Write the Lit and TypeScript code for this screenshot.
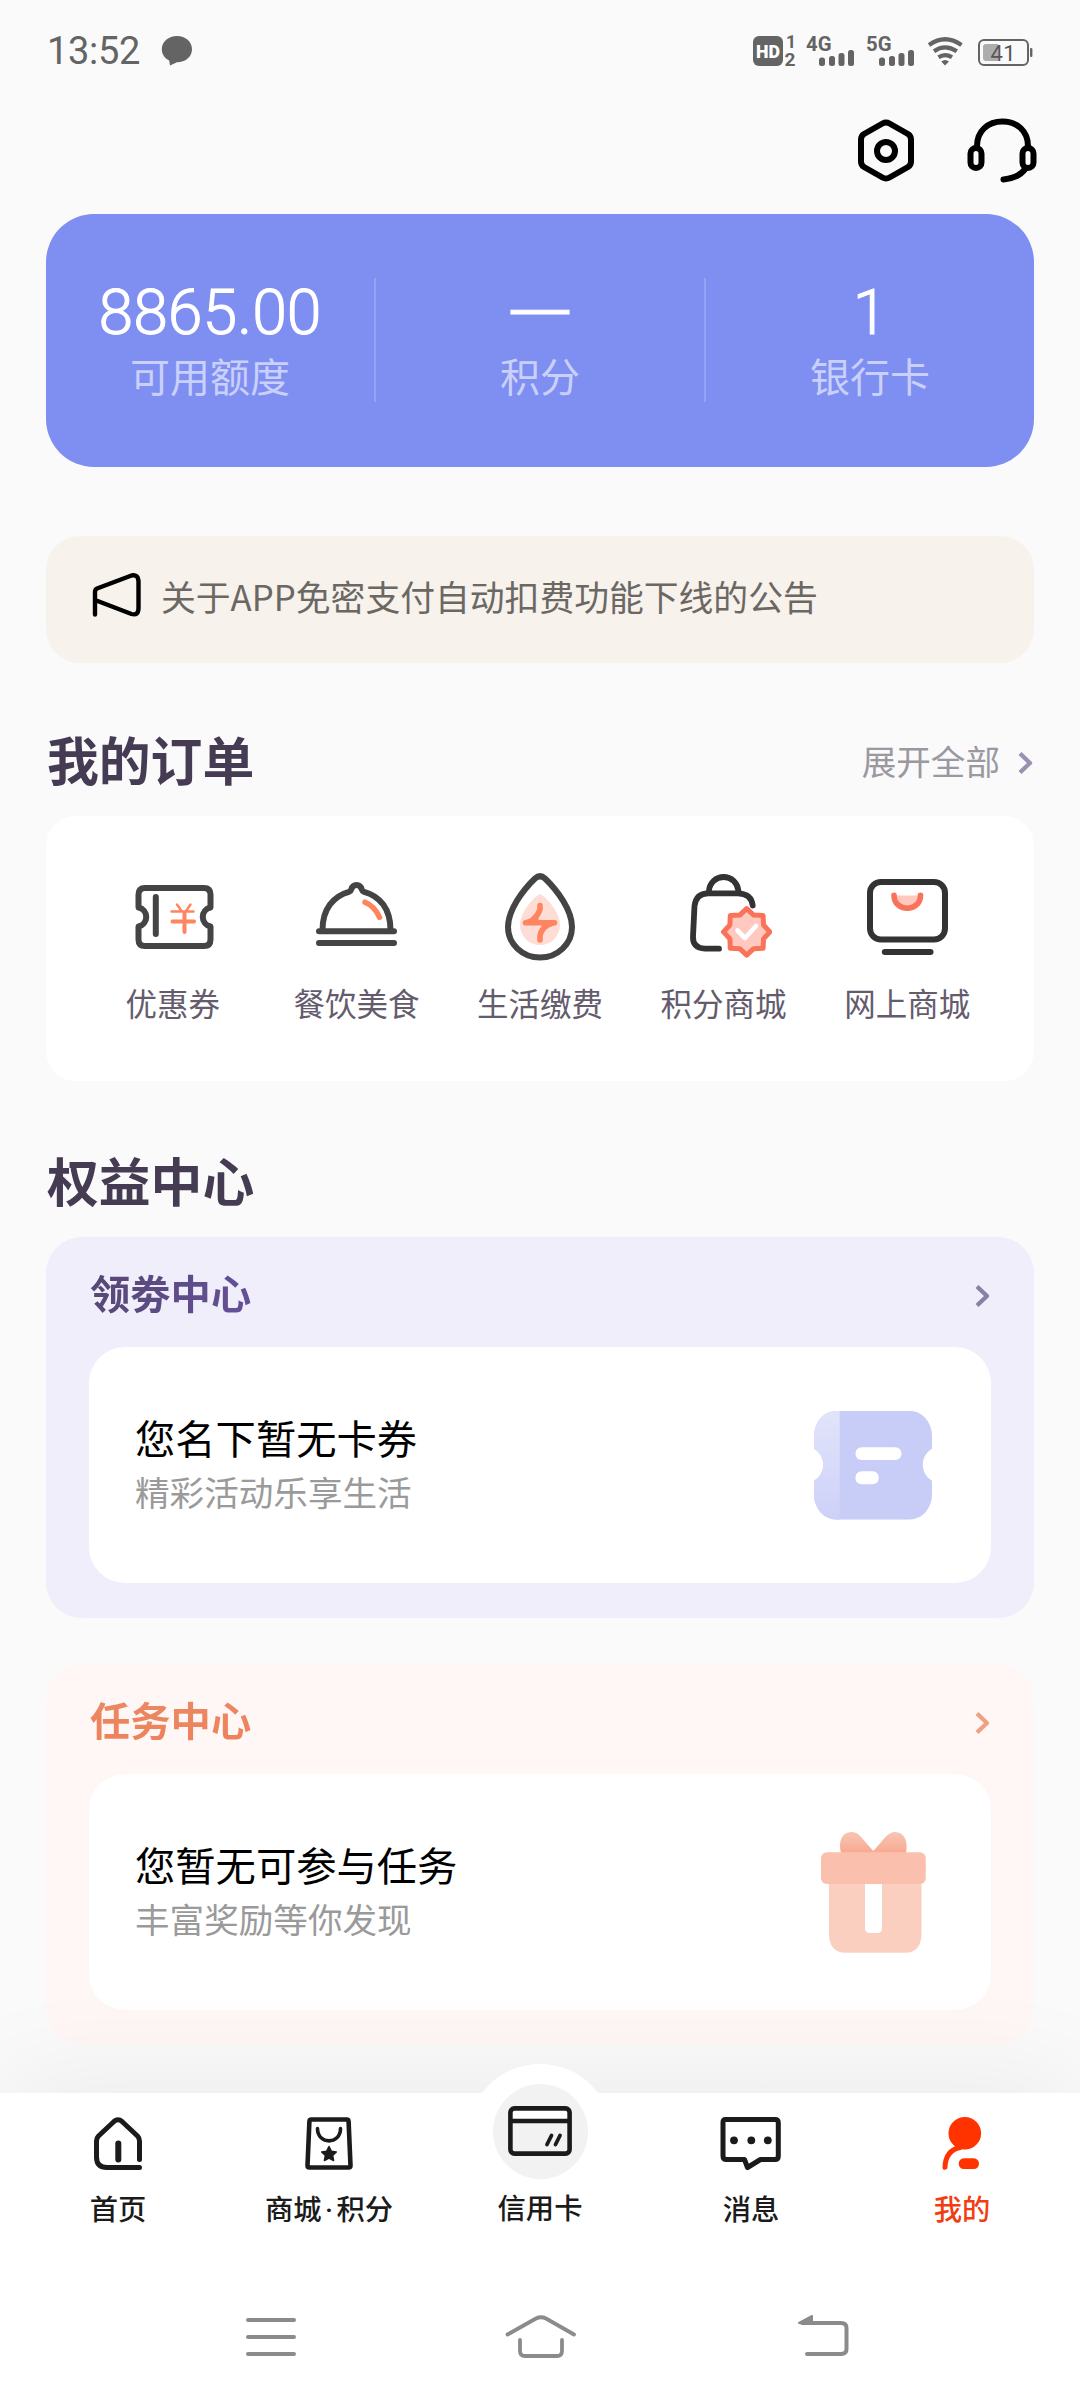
import { LitElement, html, css, svg, nothing, type TemplateResult } from "lit";
import { customElement, property } from "lit/decorators.js";

const burst = (cx: number, cy: number, tip: number, valley: number): string =>
  Array.from({ length: 16 }, (_, i) => {
    const r = i % 2 ? valley : tip;
    const a = (i * Math.PI) / 8;
    return `${(cx + r * Math.sin(a)).toFixed(2)},${(cy - r * Math.cos(a)).toFixed(2)}`;
  }).join(" ");

const stroke = (w: number, body: TemplateResult, color = "#444") => svg`
  <g fill="none" stroke=${color} stroke-width=${w} stroke-linecap="round" stroke-linejoin="round">${body}</g>`;

const ICONS: Record<string, TemplateResult> = {
  voucher: html`<svg width="96" height="92" viewBox="0 0 96 92">
    ${stroke(6, svg`
      <path d="M20 17H79q6.5 0 6.5 6.5V36.500A9.700 9.700 0 0 0 85.500 55.500V68.500q0 6.500-6.500 6.500H20q-6.500 0-6.500-6.500V55.500A9.700 9.700 0 0 0 13.500 36.500V23.500q0-6.500 6.500-6.500z"/>
      <path d="M30.800 26V63"/>`)}
    ${stroke(2.4, svg`<path d="M52 33.500l4.500 6.500M65.500 33.500l-4.500 6.500M46.500 40.500H68.500"/>`, "#FF8460")}
    ${stroke(4, svg`<path d="M47.500 50.500H69M59.500 42V61"/>`, "#FF8460")}
  </svg>`,
  dining: html`<svg width="96" height="92" viewBox="0 0 96 92">
    ${stroke(6, svg`
      <path d="M14.500 59C14.500 38 25.500 25 41 20.800Q42.800 20 43.200 18.500Q44.500 14 48.500 14T53.800 18.500Q54.200 20 56 20.800C72 25 82.500 38 82.500 59"/>
      <path d="M11 60.300H86M11 72H86"/>`)}
    ${stroke(5.5, svg`<path d="M57 31.200Q66.500 35 71.500 46.300"/>`, "#FF8460")}
  </svg>`,
  utility: html`<svg width="96" height="92" viewBox="0 0 96 92">
    <path d="M48 23C57 28 68 43 68 54A20 20 0 0 1 28 54C28 43 39 28 48 23z" fill="#FDDDD5"/>
    ${stroke(6, svg`<path d="M43 7.500Q48 3 53 7.500C65 19 80 39 80 56A32 30.500 0 0 1 16 56C16 39 31 19 43 7.500z"/>`)}
    ${stroke(5.6, svg`<path d="M48 34.500V38Q46.500 44 40 49.500L36 51M33.500 51.700H62.500M60 52.500L56 54Q48.500 58 48 65.500V69"/>`, "#FF8460")}
    <path d="M36 52L46 44L47 51zM60 51.500L50 60L49 52z" fill="#FF8460"/>
  </svg>`,
  points: html`<svg width="96" height="92" viewBox="0 0 96 92">
    ${stroke(5.8, svg`
      <path d="M43 77.700H29Q16.500 77 17 65.500L18.500 35Q20 22.300 32 22.300H62Q75.500 22.800 76.700 34.500"/>
      <path d="M33 21.500V19.500A14.700 14.700 0 0 1 62.300 19.500V21.500"/>`, "#333")}
    <polygon points=${burst(70.7, 60.9, 23.2, 18.2)} fill="#FFC9C0" stroke="#F9735A" stroke-width="5" stroke-linejoin="round"/>
    ${stroke(4.6, svg`<path d="M61.500 59.500L69 67L80 55"/>`, "#fff")}
  </svg>`,
  online: html`<svg width="96" height="92" viewBox="-1 0 96 92">
    ${stroke(6, svg`<rect x="10" y="11" width="75" height="57.500" rx="11"/><path d="M24.800 81H70.500"/>`, "#333")}
    <path d="M34 24.500C34 41.500 60 41.500 60 24.500z" fill="#FFC9C0"/>
    ${stroke(5.6, svg`<path d="M34 24.200C34 41.500 60.500 41.500 60.500 24.200"/>`, "#F9735A")}
  </svg>`,
  coupon: html`<svg width="118" height="110" viewBox="0 -0.700 118 110">
    <defs>
      <linearGradient id="band" x1="0" y1="0" x2="0" y2="1"><stop offset="0" stop-color="#E2E4FA"/><stop offset="1" stop-color="#CDD1F8"/></linearGradient>
      <clipPath id="shape"><path d="M23 0H95A23 25 0 0 1 118 25V38A18.500 18.500 0 0 0 118 70V84A23 25 0 0 1 95 109H23A23 25 0 0 1 0 84V70A18.500 18.500 0 0 0 0 38V25A23 25 0 0 1 23 0z"/></clipPath>
    </defs>
    <g clip-path="url(#shape)"><rect width="118" height="110" fill="#C8CDF8"/><rect width="25.700" height="110" fill="url(#band)"/></g>
    <rect x="41.500" y="36.500" width="46" height="12.800" rx="6" fill="#fff"/>
    <rect x="41.500" y="60.500" width="23.200" height="13" rx="6" fill="#fff"/>
  </svg>`,
  gift: html`<svg width="118" height="122" viewBox="0 0 118 122">
    <defs><linearGradient id="bow" x1="0" y1="0" x2="0" y2="1"><stop offset="0" stop-color="#F7C6B5"/><stop offset="1" stop-color="#F8A990"/></linearGradient></defs>
    <path d="M27 22C24 10 28 1 37.500 1Q43 1 47 6L59.300 20L71 6.500Q76 1 81 1C90 1 94.500 10 92 22z" fill="url(#bow)"/>
    <path d="M15 52H107.500V102Q107.500 121.700 91 121.700H31.500Q15 121.700 15 102z" fill="#FBCFBF"/>
    <path d="M51 52H68V97Q68 102 63 102H56Q51 102 51 97z" fill="#fff"/>
    <rect x="7" y="21.300" width="104.800" height="31.700" rx="6" fill="#FAC0AD"/>
  </svg>`,
  home: html`<svg width="64" height="56" viewBox="0 0 64 56">
    ${stroke(5, svg`<path d="M53.500 43.500V25Q53.500 22 51.500 20L36 5.500Q32 2 28 5.500L12.500 20Q10.500 22 10.500 25V41Q10.500 51.500 21 51.500H53.500"/>`, "#1b1b1b")}
    ${stroke(6, svg`<path d="M32.300 27.500V43.500"/>`, "#1b1b1b")}
  </svg>`,
  mall: html`<svg width="64" height="56" viewBox="0 0 64 56">
    ${stroke(4.6, svg`<path d="M14.300 3.500H49.700Q51.500 3.500 51.600 5.500L53.500 49.500Q53.500 51.500 51.500 51.500H12.500Q10.500 51.500 10.500 49.500L12.400 5.500Q12.500 3.500 14.300 3.500z"/>`, "#1b1b1b")}
    ${stroke(3.6, svg`<path d="M20.500 12.500C20.500 29 43.500 29 43.500 12.500"/>`, "#1b1b1b")}
    <path d="M32 30.500l2.300 4.700 5 .7-3.700 3.500 1 5.100-4.600-2.500-4.600 2.500 1-5.100-3.700-3.500 5-.7z" fill="#1b1b1b" stroke="#1b1b1b" stroke-width="1.500" stroke-linejoin="round"/>
  </svg>`,
  card: html`<svg width="64" height="50" viewBox="0 0 64 50">
    <path d="M3 4H61V15H3z" fill="#fff"/>
    ${stroke(4.6, svg`<rect x="2.400" y="2.400" width="59.200" height="45.200" rx="4"/><path d="M3 15H61"/>`, "#1b1b1b")}
    ${stroke(3.8, svg`<path d="M43.500 29.500L39 38.500M52 29.500L47.500 38.500"/>`, "#1b1b1b")}
  </svg>`,
  message: html`<svg width="64" height="56" viewBox="0 0 64 56">
    ${stroke(5, svg`<path d="M6.500 3.500H56Q59.300 3.500 59.300 6.800V40Q59.300 43.500 56 43.500H41.500L28.500 51.500L25.500 43.500H7.500Q4 43.500 4 40V6.500Q4 3.500 6.500 3.500z"/>`, "#1b1b1b")}
    <g fill="#1b1b1b"><circle cx="15" cy="24.300" r="3.900"/><circle cx="32.300" cy="24.300" r="3.900"/><circle cx="48.800" cy="24.300" r="3.900"/></g>
  </svg>`,
  me: html`<svg width="64" height="56" viewBox="0 0 64 56">
    <circle cx="34.800" cy="17.300" r="16.300" fill="#FF3300"/>
    ${stroke(5, svg`<path d="M30 31.500Q15.500 34.500 15 51.300"/>`, "#FF3300")}
    <rect x="28.700" y="42.200" width="20.300" height="10.800" rx="5.200" fill="#FF3300"/>
  </svg>`,
};

const STATS = [
  { value: "8865.00", label: "可用额度" },
  { value: "—", label: "积分" },
  { value: "1", label: "银行卡" },
];
const ORDERS = [
  ["voucher", "优惠券"],
  ["dining", "餐饮美食"],
  ["utility", "生活缴费"],
  ["points", "积分商城"],
  ["online", "网上商城"],
];
const TABS = [
  ["home", "首页"],
  ["mall", "商城·积分"],
  ["card", "信用卡"],
  ["message", "消息"],
  ["me", "我的"],
];

@customElement("ui-chevron")
export class UiChevron extends LitElement {
  @property() color = "#8B7FA3";
  static styles = css`:host { display: block; width: 16px; height: 24px; } svg { display: block; }`;
  render() {
    return html`<svg width="16" height="24" viewBox="0 0 16 24">
      ${stroke(4.3, svg`<path d="M2 2.500L12 12L2 21.500" stroke-linecap="butt"/>`, this.color)}
    </svg>`;
  }
}

@customElement("status-bar")
export class StatusBar extends LitElement {
  static styles = css`
    :host { display: flex; align-items: flex-start; height: 103px; box-sizing: border-box; padding: 28px 46px 0 47px; justify-content: space-between; color: #646464; font-family: Roboto, "Noto Sans CJK SC", sans-serif; }
    svg { display: block; }
    .left { display: flex; align-items: flex-start; gap: 21px; padding-top: 8px; }
    .time { font-size: 38px; line-height: 31px; letter-spacing: -0.300px; }
  `;
  private signal(x: number, label: string) {
    return svg`
      <text x=${x - 1} y="15" font-size="21" font-weight="700" textLength="25.500" lengthAdjust="spacingAndGlyphs">${label}</text>
      <rect x=${x + 12} y="21.500" width="6" height="8.500" rx="2.500"/>
      <rect x=${x + 22} y="20" width="6" height="10" rx="2.500"/>
      <rect x=${x + 31.5} y="17" width="6" height="13" rx="2.500"/>
      <rect x=${x + 41} y="14" width="6" height="16" rx="2.500"/>`;
  }
  render() {
    return html`
      <div class="left">
        <span class="time">13:52</span>
        <svg width="32" height="30" viewBox="0 0 32 30"><path d="M16 0C24.500 0 31 5.700 31 13.200S24.500 26.300 16 26.300L9 29.500L8.200 24.500C3.500 22 .8 18 .8 13.200C.8 5.700 7.500 0 16 0z" fill="#646464"/></svg>
      </div>
      <svg width="281" height="44" viewBox="0 -8 281 44" fill="#646464">
        <rect width="30" height="30" rx="6"/>
        <text x="3" y="21.800" font-size="18.500" font-weight="900" fill="#fff" textLength="24" lengthAdjust="spacingAndGlyphs">HD</text>
        <text x="33" y="12.300" font-size="17.500" font-weight="700">1</text>
        <text x="31.500" y="29.500" font-size="18" font-weight="700" textLength="11" lengthAdjust="spacingAndGlyphs">2</text>
        ${this.signal(54, "4G")}${this.signal(114, "5G")}
        <g fill="none" stroke="#646464" stroke-width="4.200">
          <path d="M176 9Q192 -2.500 208.500 9"/><path d="M181 15.300Q192 7.500 203.800 15.300"/><path d="M185.500 21.300Q192 17 199 21.300"/>
        </g>
        <path d="M188.200 25.500Q192 22.500 196 25.500L192 29.500z"/>
        <rect x="226" y="4" width="49" height="25" rx="5" fill="none" stroke="#646464" stroke-width="2"/>
        <path d="M233 8H245V25H233Q230 25 230 22V11Q230 8 233 8z" fill="#adadad"/>
        <rect x="277" y="12" width="2.400" height="9" rx="1"/>
        <text x="237.500" y="24.500" font-size="22" fill="#555" textLength="25">41</text>
      </svg>`;
  }
}

@customElement("benefit-card")
export class BenefitCard extends LitElement {
  @property() heading = "";
  @property() primary = "";
  @property() secondary = "";
  @property() icon = "coupon";
  @property() accent = "#8B7FA3";
  static styles = css`
    :host { display: flex; flex-direction: column; box-sizing: border-box; height: 381px; padding: 0 43px 35px; border-radius: 36px; }
    .head { display: flex; align-items: center; justify-content: space-between; height: 110px; }
    .title { font-size: 40.300px; line-height: 58px; font-weight: 700; color: transparent; background: var(--title); background-clip: text; -webkit-background-clip: text; margin: -1px 0 0 1px; }
    ui-chevron { margin-top: 7px; }
    .body { flex: 1; display: flex; align-items: center; justify-content: space-between; background: #fff; border-radius: 36px; padding: 0 59px 0 46px; }
    .copy { display: flex; flex-direction: column; margin-top: -2px; }
    .primary { font-size: 40.300px; line-height: 54px; color: #000; }
    .secondary { font-size: 34.600px; line-height: 54px; color: #9a9a9a; }
    svg { display: block; }
  `;
  render() {
    return html`
      <div class="head"><span class="title">${this.heading}</span><ui-chevron .color=${this.accent}></ui-chevron></div>
      <div class="body">
        <div class="copy"><span class="primary">${this.primary}</span><span class="secondary">${this.secondary}</span></div>
        ${ICONS[this.icon]}
      </div>`;
  }
}

@customElement("app-root")
export class AppRoot extends LitElement {
  static styles = css`
    :host { display: flex; flex-direction: column; width: 1080px; height: 2400px; overflow: hidden; background: #fafafa; font-family: "Noto Sans CJK SC", sans-serif; }
    svg { display: block; }
    .page { display: flex; flex-direction: column; height: 2093px; box-sizing: border-box; }
    .content { display: flex; flex-direction: column; padding: 0 46px; }
    .actions { display: flex; justify-content: flex-end; gap: 50px; height: 111px; box-sizing: border-box; padding: 14px 0 0; margin-right: -4px; }
    .stats { display: flex; height: 253px; border-radius: 48px; background: #7f8ff1; align-items: center; }
    .stat { flex: 1; height: 124px; margin-bottom: 1px; display: flex; flex-direction: column; align-items: center; box-sizing: border-box; }
    .stat + .stat { border-left: 2px solid #94a2f4; }
    .value { font-family: Roboto, sans-serif; font-weight: 300; font-size: 62.500px; line-height: 70px; margin-bottom: -2px; color: #fff; -webkit-text-stroke: 1px #fff; }
    .value.empty { font-family: "Liberation Sans", sans-serif; font-size: 58px; font-weight: 400; line-height: 58px; margin-bottom: 10px; }
    .label { font-size: 40px; line-height: 58px; color: #c9d0fb; }
    .notice { display: flex; align-items: center; height: 127px; margin-top: 69px; border-radius: 34px; background: #f7f2ec; padding: 0 46px; gap: 19px; font-size: 34.800px; color: #6b6763; white-space: nowrap; }
    .notice span { line-height: 50px; margin-top: -7px; }
    .notice svg { margin-top: -9px; }
    .section { display: flex; align-items: center; justify-content: space-between; height: 153px; }
    .section h2 { margin: 39px 0 0 1px; font-size: 51.800px; line-height: 76px; font-weight: 700; color: #453b52; }
    .section.second { height: 156px; }
    .section.second h2 { margin-top: 42px; }
    .more { display: flex; align-items: center; gap: 18px; margin-top: 40px; font-size: 34.600px; line-height: 50px; color: #9b98a1; }
    .more ui-chevron { margin-top: 7px; }
    .orders { display: flex; height: 265px; box-sizing: border-box; padding: 55px 35px 0; border-radius: 30px; background: #fff; }
    .order { flex: 1; display: flex; flex-direction: column; align-items: center; gap: 19px; font-size: 31.500px; line-height: 40px; color: #645c6d; }
    .purple { background: #efeefa; --title: linear-gradient(100deg, #564873, #64509a); }
    .peach { background: #fff7f5; margin-top: 46px; --title: linear-gradient(#ea8a66, #ee8159); }
    .dock { position: relative; z-index: 1; flex: 1; display: flex; flex-direction: column; background: #fff; box-shadow: 0 -15px 110px rgba(0, 0, 0, 0.06); }
    .tabs { display: flex; height: 162px; padding: 0 12.500px; }
    .tab { position: relative; flex: 1; display: flex; flex-direction: column; align-items: center; padding-top: 23px; gap: 16px; font-size: 28.300px; line-height: 40px; font-weight: 500; color: #1b1b1b; }
    .tab.active { color: #f23c12; }
    .tab .dot { font-family: Roboto, sans-serif; margin: 0 3.500px; }
    .bump { position: absolute; left: 50%; top: -29px; width: 146px; height: 146px; margin-left: -73px; border-radius: 50%; background: #fff; }
    .disc { position: relative; margin: -32.500px 0 -8px; width: 95px; height: 95px; border-radius: 50%; background: #f2f2f2; display: flex; align-items: center; justify-content: center; }
    .caption { position: relative; }
    .system { flex: 1; display: flex; align-items: flex-start; padding: 60px 0 0 245px; }
    .system .sys-home { margin-left: 208px; }
    .system .sys-back { margin-left: 221px; }
  `;

  private tab([icon, label]: string[]) {
    const center = icon === "card";
    const parts = label.split("·");
    return html`<div class="tab ${icon === "me" ? "active" : ""}">
      ${center ? html`<div class="bump"></div><div class="disc">${ICONS[icon]}</div>` : ICONS[icon]}
      <span class="caption">${parts[0]}${parts.length > 1 ? html`<span class="dot">·</span>${parts[1]}` : nothing}</span>
    </div>`;
  }

  render() {
    return html`
      <div class="page">
        <status-bar></status-bar>
        <div class="content">
          <div class="actions">
            <svg width="60" height="68" viewBox="0 0 60 68">
              ${stroke(6, svg`<path d="M26.500 6.500Q30 4.500 33.500 6.500L52 17Q55 19 55 22.500V44.500Q55 48 52 50L33.500 60.500Q30 62.500 26.500 60.500L8 50Q5 48 5 44.500V22.500Q5 19 8 17z"/><circle cx="30" cy="34" r="9"/>`, "#000")}
            </svg>
            <svg width="72" height="68" viewBox="0 0 72 68">
              ${stroke(6, svg`<path d="M11 29C11 14 22 4.500 36.500 4.500S62 14 62 29"/><rect x="4.500" y="31" width="11" height="20" rx="5.500"/><rect x="56.500" y="31" width="11" height="20" rx="5.500"/><path d="M59.500 51.500Q53 61 37.500 62.500"/>`, "#000")}
            </svg>
          </div>
          <div class="stats">
            ${STATS.map((s) => html`<div class="stat"><span class="value ${s.value === "—" ? "empty" : ""}">${s.value}</span><span class="label">${s.label}</span></div>`)}
          </div>
          <div class="notice">
            <svg width="50" height="46" viewBox="0 0 50 46">
              ${stroke(4.4, svg`<path d="M3 42.500V20Q3 17.500 5 16.500L39.500 3.500Q46.500 2 46.500 10V36Q46.500 44 39.500 42L3 28"/>`, "#000")}
            </svg>
            <span>关于APP免密支付自动扣费功能下线的公告</span>
          </div>
          <div class="section">
            <h2>我的订单</h2>
            <div class="more">展开全部<ui-chevron .color=${"#9A90B2"}></ui-chevron></div>
          </div>
          <div class="orders">
            ${ORDERS.map(([icon, label]) => html`<div class="order">${ICONS[icon]}<span>${label}</span></div>`)}
          </div>
          <div class="section second"><h2>权益中心</h2></div>
          <benefit-card class="purple" heading="领劵中心" primary="您名下暂无卡券" secondary="精彩活动乐享生活" icon="coupon" accent="#8A80A6"></benefit-card>
          <benefit-card class="peach" heading="任务中心" primary="您暂无可参与任务" secondary="丰富奖励等你发现" icon="gift" accent="#F0A184"></benefit-card>
        </div>
      </div>
      <div class="dock">
        <div class="tabs">${TABS.map((t) => this.tab(t))}</div>
        <div class="system">
          <svg width="52" height="42" viewBox="0 0 52 42">${stroke(4, svg`<path d="M3 5H49M3 22H49M3 39H49"/>`, "#8b8b8b")}</svg>
          <svg class="sys-home" width="72" height="44" viewBox="0 0 72 44">${stroke(3.8, svg`<path d="M2.500 19.500L31 3.500Q36 1 41 3.500L69 19.500M15 25V36Q15 41 20 41H52Q57 41 57 36V25"/>`, "#8b8b8b")}</svg>
          <svg class="sys-back" width="52" height="42" viewBox="0 0 52 42"><path d="M1 8L14 1V8z" fill="#8b8b8b" stroke="#8b8b8b" stroke-width="2" stroke-linejoin="round"/>${stroke(4, svg`<path d="M4 8H43Q48.500 8 48.500 13V34Q48.500 39 43 39H9"/>`, "#8b8b8b")}</svg>
        </div>
      </div>`;
  }
}
